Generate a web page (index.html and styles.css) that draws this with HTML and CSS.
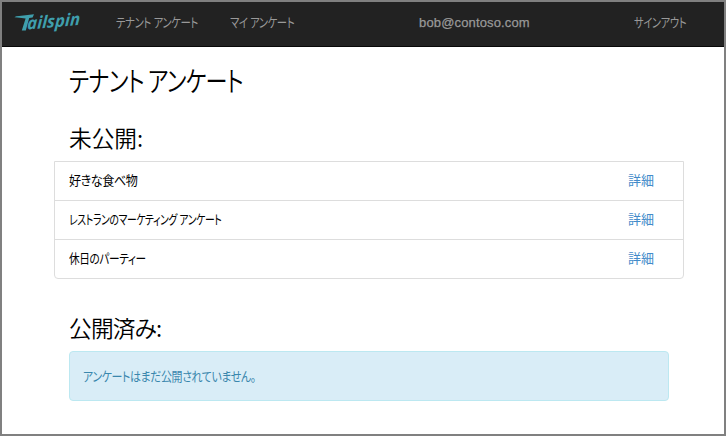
FILE: index.html
```html
<!DOCTYPE html>
<html lang="ja">
<head>
<meta charset="utf-8">
<title>テナント アンケート</title>
<link rel="stylesheet" href="styles.css">
</head>
<body>
<header class="navbar">
  <a class="brand">
    <svg width="72" height="28" viewBox="0 0 72 28" fill="#3f9fad">
      <path d="M.5 10.2 Q1.5 9 5 9 L20 7.2 L18.6 10.4 L15.2 11 L11.8 23.6 L7.8 23.6 L11.6 11.4 Q5 10.8 .5 10.2Z"/>
      <text class="logo-text" transform="translate(13 22.6) rotate(-5) skewX(-8)" textLength="53" lengthAdjust="spacingAndGlyphs">ailspin</text>
    </svg>
  </a>
  <nav class="links">
    <a class="l1"><span class="fit">テナント アンケート</span></a>
    <a class="l2"><span class="fit">マイ アンケート</span></a>
  </nav>
  <span class="user">bob@contoso.com</span>
  <a class="signout"><span class="fit">サインアウト</span></a>
</header>
<main class="content">
  <h1><span class="fit">テナント アンケート</span></h1>
  <h2 class="s1">未公開:</h2>
  <ul class="list">
    <li><span class="fit r1">好きな食べ物</span><a>詳細</a></li>
    <li><span class="fit r2">レストランのマーケティング アンケート</span><a>詳細</a></li>
    <li><span class="fit r3">休日のパーティー</span><a>詳細</a></li>
  </ul>
  <h2 class="s2">公開済み:</h2>
  <div class="alert"><span class="fit">アンケートはまだ公開されていません。</span></div>
</main>
</body>
</html>
```
FILE: styles.css
```css
* { box-sizing: border-box; }
body {
  margin: 0;
  height: 436px;
  border: 2px solid #808080;
  overflow: hidden;
  background: #fff;
  color: #000;
  font: 13px/20px "Liberation Sans", "Noto Sans CJK JP", sans-serif;
  font-feature-settings: "palt";
  white-space: nowrap;
}
.fit { display: inline-block; letter-spacing: -.5px; transform-origin: left center; }
.navbar {
  display: flex;
  height: 45px;
  padding: 11px 37px 0 12px;
  background: #222;
  border-bottom: 1px solid #080808;
  color: #999;
}
.brand { width: 72px; height: 28px; margin-top: -6px; }
.brand svg { display: block; overflow: visible; }
.logo-text { font: italic 700 17px "Open Sans", sans-serif; }
.links { display: flex; margin-left: 30px; }
.l1 { width: 114px; }
.l2 { width: 189px; }
.l1 .fit { transform: scaleX(.8); }
.l2 .fit { transform: scaleX(.795); }
.user { letter-spacing: .15px; -webkit-text-stroke: .25px #999; }
.signout { margin-left: auto; width: 53px; }
.signout .fit { transform: scaleX(.79); }
.content { padding: 17px 40px 0 52px; }
h1, h2 { margin: 0 0 0 15px; font-family: "Noto Sans CJK JP", sans-serif; }
h1 { font-size: 28px; font-weight: 350; line-height: 32px; }
h1 .fit { letter-spacing: -1px; transform: scaleX(.79); }
h2 { font-size: 22.7px; font-weight: 350; line-height: 28px; }
.s1 { margin-top: 28px; }
.list {
  margin: 9px 0 0;
  padding: 0;
  list-style: none;
  border: 1px solid #ddd;
  border-radius: 0 0 4px 4px;
}
.list li { display: flex; justify-content: space-between; height: 39px; padding: 9px 29px 0 14px; }
.list li:first-child { height: 38px; }
.list li + li { border-top: 1px solid #ddd; }
.list a { color: #428bca; }
.r1 { transform: scaleX(.93); }
.r2 { transform: scaleX(.757); }
.r3 { transform: scaleX(.82); }
.s2 { margin-top: 35px; letter-spacing: -.8px; }
.alert {
  margin: 9px 15px 0;
  height: 50px;
  padding: 15px 13px;
  background: #d9edf7;
  border: 1px solid #bce8f1;
  border-radius: 4px;
  color: #3a87ad;
}
.alert .fit { transform: scaleX(.845); }
```
